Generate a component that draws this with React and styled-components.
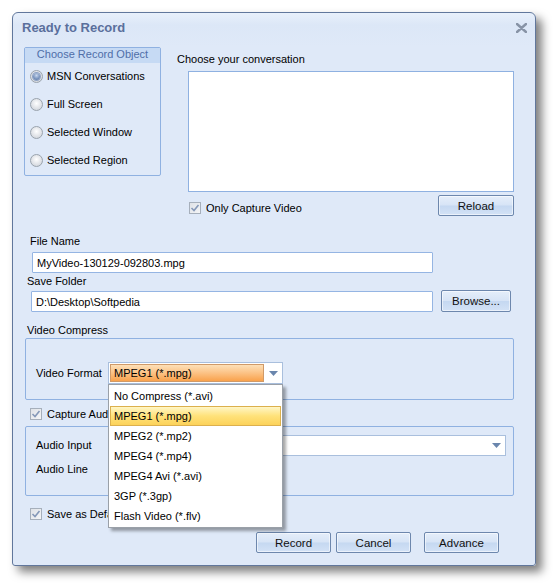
import React from 'react';
import styled, { createGlobalStyle } from 'styled-components';

const GlobalStyle = createGlobalStyle`
  html, body {
    margin: 0;
    padding: 0;
    background: #ffffff;
  }
  body {
    font-family: "Liberation Sans", Arial, sans-serif;
    font-size: 11px;
    color: #000;
  }
`;

const Page = styled.div`
  width: 556px;
  height: 588px;
  padding: 12px 0 0 12px;
  box-sizing: border-box;
`;

const Window = styled.div`
  width: 524px;
  height: 554px;
  box-sizing: border-box;
  border: 1px solid #61779c;
  border-radius: 6px 6px 3px 3px;
  background: linear-gradient(#e8f0fb 0, #dce7f7 12px, #dfe9f8 34px);
  box-shadow: 6px 6px 10px rgba(0, 0, 0, 0.5);
`;

const TitleBar = styled.div`
  height: 34px;
  display: flex;
  align-items: flex-start;
  justify-content: space-between;
  padding: 7px 8px 0 9px;
  box-sizing: border-box;
`;

const Title = styled.div`
  font-size: 13px;
  font-weight: bold;
  color: #5a6f9c;
  line-height: 15px;
`;

const CloseBtn = styled.div`
  margin-top: 3px;
  width: 11px;
  height: 10px;
  display: flex;
`;

const TopSection = styled.div`
  display: flex;
  align-items: flex-start;
  margin-left: 11px;
  height: 169px;
`;

const GroupBox = styled.div`
  width: ${({ $w }) => $w}px;
  height: ${({ $h }) => $h}px;
  box-sizing: border-box;
  border: 1px solid #8fb1e1;
  border-radius: 2px;
  margin-left: ${({ $ml = 0 }) => $ml}px;
  margin-top: ${({ $mt = 0 }) => $mt}px;
  padding-top: ${({ $pt = 0 }) => $pt}px;
`;

const GroupHeader = styled.div`
  height: 15px;
  line-height: 13px;
  background: #c6daf4;
  color: #4f6ea8;
  text-align: center;
  font-size: 11px;
`;

const RadioList = styled.div`
  padding: 0 0 0 5px;
  margin-top: -1px;
`;

const RadioRow = styled.label`
  height: 28px;
  display: flex;
  align-items: center;
  gap: 4px;
`;

const RadioDot = styled.span`
  width: 13px;
  height: 13px;
  box-sizing: border-box;
  border-radius: 50%;
  border: 1px solid #9aa3ad;
  background: radial-gradient(circle at 50% 40%, #ffffff 0, #e6e8ec 45%, #c9ced6 100%);
  display: flex;
  align-items: center;
  justify-content: center;

  &::after {
    content: '';
    width: 7px;
    height: 7px;
    border-radius: 50%;
    display: ${({ $checked }) => ($checked ? 'block' : 'none')};
    background: radial-gradient(circle at 50% 35%, #c9d8ee 0, #7d97c0 55%, #4f6e9e 100%);
    box-shadow: 0 0 0 1px #8fa3c4;
  }
`;

const RightColumn = styled.div`
  margin-left: 16px;
  display: flex;
  flex-direction: column;
`;

const Label = styled.div`
  line-height: 13px;
  height: 13px;
  margin-left: ${({ $ml = 0 }) => $ml}px;
  margin-top: ${({ $mt = 0 }) => $mt}px;
  width: ${({ $w }) => ($w ? `${$w}px` : 'auto')};
  flex-shrink: 0;
  white-space: nowrap;
`;

const ListBox = styled.div`
  width: 326px;
  height: 121px;
  box-sizing: border-box;
  margin: 5px 0 0 11px;
  background: #fff;
  border: 1px solid #8fb1e1;
`;

const CaptureRow = styled.div`
  display: flex;
  justify-content: space-between;
  align-items: flex-start;
  margin: 3px 0 0 12px;
  width: 325px;
`;

const CheckRow = styled.label`
  display: flex;
  align-items: center;
  gap: 5px;
  height: 13px;
  margin-left: ${({ $ml = 0 }) => $ml}px;
  margin-top: ${({ $mt = 0 }) => $mt}px;
  white-space: nowrap;
`;

const CheckBox = styled.span`
  width: 12px;
  height: 12px;
  box-sizing: border-box;
  border: 1px solid #a6afbb;
  background: linear-gradient(135deg, #dfe2e7, #f4f5f7);
  display: flex;
  align-items: center;
  justify-content: center;
`;

const Button = styled.div`
  width: ${({ $w }) => $w}px;
  height: ${({ $h = 21 }) => $h}px;
  box-sizing: border-box;
  margin-left: ${({ $ml = 0 }) => $ml}px;
  border: 1px solid #6d87ad;
  border-radius: 2px;
  background: linear-gradient(#e5eefa 0%, #d7e4f6 48%, #c5d8f1 52%, #d3e2f6 100%);
  box-shadow: inset 0 0 0 1px rgba(255, 255, 255, 0.55);
  display: flex;
  align-items: center;
  justify-content: center;
  font-size: 11.5px;
  color: #111;
  flex-shrink: 0;
`;

const TextInput = styled.div`
  width: ${({ $w }) => $w}px;
  height: 21px;
  box-sizing: border-box;
  margin-left: ${({ $ml = 0 }) => $ml}px;
  margin-top: ${({ $mt = 0 }) => $mt}px;
  border: 1px solid #95b5e3;
  border-radius: 1px;
  background: #fff;
  padding-left: 4px;
  display: flex;
  align-items: center;
  font-size: 11px;
  flex-shrink: 0;
`;

const InputRow = styled.div`
  display: flex;
  align-items: center;
  margin-left: ${({ $ml = 0 }) => $ml}px;
  margin-top: ${({ $mt = 0 }) => $mt}px;
`;

const FieldRow = styled.div`
  display: flex;
  align-items: center;
  padding-left: 10px;
  margin-top: ${({ $mt = 0 }) => $mt}px;
`;

const Combo = styled.div`
  position: relative;
  width: ${({ $w }) => $w}px;
  height: ${({ $h = 21 }) => $h}px;
  box-sizing: border-box;
  border: 1px solid #a9bfdd;
  background: #fff;
  display: flex;
  align-items: center;
  padding: 0 0 0 1px;
  flex-shrink: 0;
`;

const ComboValue = styled.div`
  flex: 1;
  height: 18px;
  box-sizing: border-box;
  border: 1px solid #d09a68;
  background: linear-gradient(#fde0b8 0%, #fcc58a 45%, #f9a24c 100%);
  padding-left: 3px;
  display: flex;
  align-items: center;
  font-size: 11px;
`;

const ComboArrow = styled.div`
  width: 18px;
  height: 100%;
  display: flex;
  align-items: center;
  justify-content: center;
  margin-left: auto;
`;

const DropList = styled.div`
  position: absolute;
  left: -1px;
  top: 21px;
  width: 175px;
  height: 144px;
  box-sizing: border-box;
  border: 1px solid #9aa0a8;
  background: #fff;
  padding: 1px 1px 0 1px;
  box-shadow: 3px 3px 3px rgba(0, 0, 0, 0.35);
  z-index: 5;
`;

const DropItem = styled.div`
  height: 20px;
  box-sizing: border-box;
  padding-left: 3px;
  display: flex;
  align-items: center;
  font-size: 11px;
  border: 1px solid ${({ $active }) => ($active ? '#dcb04d' : 'transparent')};
  background: ${({ $active }) =>
    $active ? 'linear-gradient(#fff6c6 0%, #ffe27a 50%, #fcd25a 100%)' : 'transparent'};
`;

const ButtonBar = styled.div`
  display: flex;
  margin: 12px 0 0 243px;
`;

const Arrow = () => (
  <svg width="9" height="5" viewBox="0 0 9 5">
    <path d="M0 0 H9 L4.5 5 Z" fill="#6a86ad" />
  </svg>
);

const Check = () => (
  <svg width="10" height="10" viewBox="0 0 10 10">
    <path d="M1.5 5 L4 7.5 L8.5 2" fill="none" stroke="#8598b8" strokeWidth="1.6" />
  </svg>
);

const Radio = ({ checked, children }) => (
  <RadioRow>
    <RadioDot $checked={checked} />
    <span>{children}</span>
  </RadioRow>
);

const Checked = ({ children, ml, mt }) => (
  <CheckRow $ml={ml} $mt={mt}>
    <CheckBox>
      <Check />
    </CheckBox>
    <span>{children}</span>
  </CheckRow>
);

const formats = [
  'No Compress (*.avi)',
  'MPEG1 (*.mpg)',
  'MPEG2 (*.mp2)',
  'MPEG4 (*.mp4)',
  'MPEG4 Avi (*.avi)',
  '3GP (*.3gp)',
  'Flash Video (*.flv)',
];

const App = () => (
  <Page>
    <GlobalStyle />
    <Window>
      <TitleBar>
        <Title>Ready to Record</Title>
        <CloseBtn>
          <svg width="11" height="10" viewBox="0 0 11 10">
            <path d="M1 1 L10 9 M10 1 L1 9" stroke="#8793a6" strokeWidth="2.4" strokeLinecap="round" />
          </svg>
        </CloseBtn>
      </TitleBar>

      <TopSection>
        <GroupBox $w={137} $h={129}>
          <GroupHeader>Choose Record Object</GroupHeader>
          <RadioList>
            <Radio checked>MSN Conversations</Radio>
            <Radio>Full Screen</Radio>
            <Radio>Selected Window</Radio>
            <Radio>Selected Region</Radio>
          </RadioList>
        </GroupBox>
        <RightColumn>
          <Label $mt={6}>Choose your conversation</Label>
          <ListBox />
          <CaptureRow>
            <Checked mt={6}>Only Capture Video</Checked>
            <Button $w={76}>Reload</Button>
          </CaptureRow>
        </RightColumn>
      </TopSection>

      <Label $ml={17} $mt={19}>File Name</Label>
      <TextInput $w={401} $ml={19} $mt={4}>MyVideo-130129-092803.mpg</TextInput>
      <Label $ml={14} $mt={2}>Save Folder</Label>
      <InputRow $ml={18} $mt={2}>
        <TextInput $w={402} $mt={1}>D:\Desktop\Softpedia</TextInput>
        <Button $w={70} $h={22} $ml={8}>Browse...</Button>
      </InputRow>

      <Label $ml={14} $mt={12}>Video Compress</Label>
      <GroupBox $w={489} $h={62} $ml={12} $mt={1} $pt={23}>
        <FieldRow>
          <Label $w={72}>Video Format</Label>
          <Combo $w={175} $h={22}>
            <ComboValue>MPEG1 (*.mpg)</ComboValue>
            <ComboArrow>
              <Arrow />
            </ComboArrow>
            <DropList>
              {formats.map((f, i) => (
                <DropItem key={f} $active={i === 1}>{f}</DropItem>
              ))}
            </DropList>
          </Combo>
        </FieldRow>
      </GroupBox>

      <Checked ml={17} mt={7}>Capture Audio</Checked>
      <GroupBox $w={489} $h={70} $ml={12} $mt={6} $pt={8}>
        <FieldRow>
          <Label $w={72}>Audio Input</Label>
          <Combo $w={398}>
            <ComboArrow>
              <Arrow />
            </ComboArrow>
          </Combo>
        </FieldRow>
        <FieldRow $mt={3}>
          <Label $w={72}>Audio Line</Label>
          <Combo $w={170} />
        </FieldRow>
      </GroupBox>

      <Checked ml={17} mt={11}>Save as Default</Checked>

      <ButtonBar>
        <Button $w={75}>Record</Button>
        <Button $w={75} $ml={5}>Cancel</Button>
        <Button $w={75} $ml={13}>Advance</Button>
      </ButtonBar>
    </Window>
  </Page>
);

export default App;
